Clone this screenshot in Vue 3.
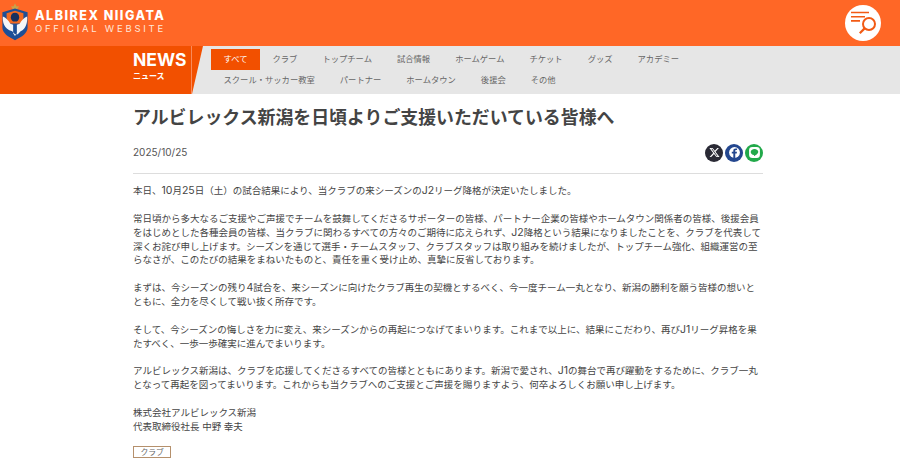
<script setup>
const cats1 = ['クラブ','トップチーム','試合情報','ホームゲーム','チケット','グッズ','アカデミー','スクール・サッカー教室','パートナー','ホームタウン','後援会','その他']
</script>

<template>
  <div class="page">
    <header class="top">
      <div class="brand">
        <svg class="crest" viewBox="0 0 30 42" width="28" height="40">
          <path d="M15 1l1.500 3 3 .5-2 2.200.4 3L15 8.500l-2.900 1.200.4-3-2-2.200 3-.5z" fill="#c9a24a"/>
          <path d="M1.500 10.500L15 6.500l13.500 4V27c0 6-6 10-13.500 13.500C7.500 37 1.500 33 1.500 27z" fill="#1d4f96"/>
          <path d="M6 11.500L15 9l9 2.500v11H6z" fill="#f26a21"/>
          <path d="M15 11c-3 0-4.500 2-4.500 5 0 2 1 3.500 2.500 4.500h4c1.500-1 2.500-2.500 2.500-4.500 0-3-1.500-5-4.500-5z" fill="#16305f"/>
          <path d="M2 15c3 1 6 4 8 8l3 1v9l2 3 2-3v-9l3-1c2-4 5-7 8-8 .5 6-1 13-7 16l-3 3-3 0-3-3C3 28 1.500 21 2 15z" fill="#f4f6f8"/>
        </svg>
        <div class="wordmark">
          <div class="wm1">ALBIREX NIIGATA</div>
          <div class="wm2">OFFICIAL WEBSITE</div>
        </div>
      </div>
      <div class="finder">
        <svg viewBox="0 0 36 36" width="36" height="36">
          <circle cx="18" cy="18" r="18" fill="#fff"/>
          <g stroke="#f25a14" stroke-width="1.600" fill="none" stroke-linecap="butt">
            <path d="M6 7.500h18M6 11.700h14M6 15.900h9"/>
            <circle cx="24" cy="19" r="6" stroke-width="2"/>
            <path d="M19.600 23.400l-4.800 4.800" stroke-width="2.200"/>
          </g>
        </svg>
      </div>
    </header>

    <div class="band">
      <div class="band-title">
        <div class="news">
          <div class="news-en">NEWS</div>
          <div class="news-ja">ニュース</div>
        </div>
      </div>
      <nav class="band-nav">
        <ul class="cats">
          <li class="cat active">すべて</li>
          <li v-for="c in cats1" :key="c" class="cat">{{ c }}</li>
        </ul>
      </nav>
    </div>

    <main class="article">
      <h1 class="title">アルビレックス新潟を日頃よりご支援いただいている皆様へ</h1>
      <div class="meta">
        <time class="date">2025/10/25</time>
        <div class="share">
          <span class="sbtn x">
            <svg viewBox="0 0 24 24" width="11" height="11"><path fill="#fff" d="M18.200 2h3.400l-7.400 8.500L23 22h-6.800l-5.300-7-6.100 7H1.300l7.900-9.100L.9 2h7l4.800 6.400zM17 20h1.900L7 3.900H5z"/></svg>
          </span>
          <span class="sbtn fb">
            <svg viewBox="0 0 24 24" width="13" height="13"><circle cx="12" cy="12" r="10" fill="#fff"/><path fill="#24478f" d="M13.400 22v-8h2.700l.5-3.200h-3.200V9c0-.9.400-1.700 1.800-1.700h1.500V4.600s-1.300-.2-2.600-.2c-2.600 0-4.300 1.600-4.300 4.400v2H7.000V14h2.800v8z"/></svg>
          </span>
          <span class="sbtn line">
            <svg viewBox="0 0 24 24" width="13" height="13"><rect x="2" y="2" width="20" height="20" rx="6" fill="#fff"/><path fill="#22a94a" d="M12 5.500c-3.900 0-7 2.500-7 5.600 0 2.800 2.500 5.100 5.800 5.500.6.200.3 1 .3 1.500 0 .4.400.3.700.2 1.900-1 6.900-3.800 7.200-7.200 0-3.100-3.100-5.600-7-5.600z"/></svg>
          </span>
        </div>
      </div>

      <div class="body">
        <p>本日、<span class="lat">10</span>月<span class="lat">25</span>日（土）の試合結果により、当クラブの来シーズンの<span class="lat">J2</span>リーグ降格が決定いたしました。</p>
        <p>常日頃から多大なるご支援やご声援でチームを鼓舞してくださるサポーターの皆様、パートナー企業の皆様やホームタウン関係者の皆様、後援会員<br>をはじめとした各種会員の皆様、当クラブに関わるすべての方々のご期待に応えられず、<span class="lat">J2</span>降格という結果になりましたことを、クラブを代表して<br>深くお詫び申し上げます。シーズンを通じて選手・チームスタッフ、クラブスタッフは取り組みを続けましたが、トップチーム強化、組織運営の至<br>らなさが、このたびの結果をまねいたものと、責任を重く受け止め、真摯に反省しております。</p>
        <p>まずは、今シーズンの残り<span class="lat">4</span>試合を、来シーズンに向けたクラブ再生の契機とするべく、今一度チーム一丸となり、新潟の勝利を願う皆様の想いと<br>ともに、全力を尽くして戦い抜く所存です。</p>
        <p>そして、今シーズンの悔しさを力に変え、来シーズンからの再起につなげてまいります。これまで以上に、結果にこだわり、再び<span class="lat">J1</span>リーグ昇格を果<br>たすべく、一歩一歩確実に進んでまいります。</p>
        <p>アルビレックス新潟は、クラブを応援してくださるすべての皆様とともにあります。新潟で愛され、<span class="lat">J1</span>の舞台で再び躍動をするために、クラブ一丸<br>となって再起を図ってまいります。これからも当クラブへのご支援とご声援を賜りますよう、何卒よろしくお願い申し上げます。</p>
        <p class="sign">株式会社アルビレックス新潟<br>代表取締役社長 中野 幸夫</p>
      </div>
      <span class="tag">クラブ</span>
    </main>
  </div>
</template>

<style>
html, body { margin: 0; overflow: hidden; background: #fff; }
</style>

<style scoped>
.page {
  font-family: Inter, "Noto Sans CJK JP", "Noto Sans", sans-serif;
  color: #444;
  height: 469px;
  overflow: hidden;
}
.top {
  height: 46px;
  background: #ff6726;
  display: flex;
  align-items: center;
  justify-content: space-between;
  padding: 0 19px 0 1px;
}
.brand { display: flex; align-items: center; gap: 6px; }
.crest { display: block; margin-bottom: 3px; }
.wordmark { color: #fff; font-family: Inter, sans-serif; padding-bottom: 4px; }
.wm1 { font-size: 12.500px; font-weight: 800; letter-spacing: 1.500px; line-height: 14px; white-space: nowrap; }
.wm2 { font-size: 9.500px; font-weight: 400; letter-spacing: 2.750px; line-height: 11px; color: #ffe6d8; white-space: nowrap; }
.finder { height: 36px; }
.finder svg { display: block; }

.band {
  height: 48px;
  display: flex;
  background: #f25000;
}
.band-title {
  width: 192px;
  box-sizing: border-box;
  padding-left: 133px;
  border-right: 1px solid #f98a5a;
  flex: none;
  color: #fff;
}
.news-en { font-size: 17.500px; font-weight: 700; line-height: 20px; margin-top: 4px; }
.news-ja { font-size: 8px; font-weight: 700; line-height: 12px; }
.band-nav {
  flex: 1;
  background: #e6e6e6;
  clip-path: polygon(11px 0, 100% 0, 100% 100%, 0 100%);
  padding: 3px 137px 0 19px;
}
.cats {
  list-style: none;
  margin: 0;
  padding: 0;
  display: flex;
  flex-wrap: wrap;
}
.cat {
  font-size: 8.300px;
  line-height: 20.500px;
  height: 21px;
  padding: 0 12.500px;
  color: #666;
  white-space: nowrap;
}
.cat.active { background: #f25000; color: #fff; }

.article {
  width: 630px;
  margin: 0 auto;
  position: relative;
  left: -2px;
}
.title {
  margin: 0;
  padding-top: 11px;
  font-size: 17.900px;
  font-weight: 700;
  line-height: 26px;
  color: #444;
}
.meta {
  display: flex;
  align-items: center;
  justify-content: space-between;
  margin-top: 12px;
  padding-bottom: 11px;
  border-bottom: 1px solid #ddd;
}
.date { font-size: 10px; line-height: 19px; color: #555; }
.share { display: flex; gap: 2px; }
.sbtn {
  width: 18px; height: 18px; margin: .5px 0; border-radius: 50%;
  display: flex; align-items: center; justify-content: center;
}
.x { background: #2a2a35; }
.fb { background: #24478f; }
.line { background: #22a94a; }
.body {
  margin-top: 10px;
  font-size: 9.500px;
  line-height: 13.880px;
  color: #444;
  white-space: nowrap;
}
.body p { margin: 0 0 13.880px; }
.body p.sign { margin-bottom: 0; }
.lat { font-size: 10.500px; line-height: 1; }
.tag {
  display: inline-block;
  margin-top: 12px;
  border: 1px solid #b5906c;
  font-size: 7.800px;
  line-height: 10.500px;
  padding: 0 6.500px;
  color: #666;
}
</style>
